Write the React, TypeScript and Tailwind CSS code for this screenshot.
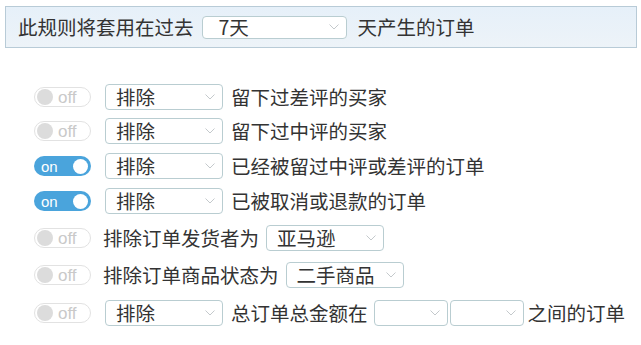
import React from "react";

const Chevron = () => (
  <svg width="10" height="6" viewBox="0 0 10 6" className="shrink-0">
    <polyline points="0.5,0.5 5,5 9.5,0.5" fill="none" stroke="#c4c9cc" strokeWidth="1" />
  </svg>
);

const Select = ({ value, w }: { value: string; w: string }) => (
  <div
    className={`${w} h-[26px] shrink-0 flex items-center justify-between pl-[10px] pr-[7px] border border-[#b9cdd1] rounded-[4px] bg-white`}
  >
    <span>{value}</span>
    <Chevron />
  </div>
);

const Toggle = ({ on }: { on: boolean }) =>
  on ? (
    <div className="w-[57px] h-[20px] shrink-0 rounded-full bg-[#4aa4dc] flex items-center justify-between pl-[7px] pr-[3px]">
      <span className="text-white text-[15px] leading-none font-medium" style={{ fontFamily: "Arial, 'Liberation Sans', sans-serif" }}>
        on
      </span>
      <span className="w-[15px] h-[15px] rounded-full bg-white" />
    </div>
  ) : (
    <div className="w-[57px] h-[20px] shrink-0 rounded-full border border-[#e2e2e2] bg-white flex items-center pl-[2px] gap-[5px]">
      <span className="w-[16px] h-[16px] rounded-full bg-[#dcdcdc]" />
      <span className="text-[#c9c9c9] text-[17px] leading-none" style={{ fontFamily: "Arial, 'Liberation Sans', sans-serif" }}>
        off
      </span>
    </div>
  );

export default function App() {
  return (
    <div
      className="w-[641px] h-[345px] bg-white text-[#333] text-[19.5px] overflow-hidden"
      style={{ fontFamily: "'Noto Sans CJK SC', 'Noto Sans', sans-serif" }}
    >
      <div className="ml-[5px] mr-[4px] mt-[6px] h-[42px] border border-[#b8cbd7] bg-gradient-to-b from-[#e6f0f9] to-[#edf3f8] flex items-center pl-[12px]">
        <span>此规则将套用在过去</span>
        <div className="ml-[8px] mr-[11px] w-[145px] h-[23px] flex items-center justify-between pl-[16px] pr-[7px] border border-[#b9cdd1] rounded-[4px] bg-white">
          <span>7天</span>
          <Chevron />
        </div>
        <span>天产生的订单</span>
      </div>

      <div className="pl-[34px] flex flex-col">
        <div className="mt-[36px] h-[26px] flex items-center">
          <Toggle on={false} />
          <div className="ml-[14px] mr-[8px]"><Select value="排除" w="w-[118px]" /></div>
          <span>留下过差评的买家</span>
        </div>
        <div className="mt-[8px] h-[26px] flex items-center">
          <Toggle on={false} />
          <div className="ml-[14px] mr-[8px]"><Select value="排除" w="w-[118px]" /></div>
          <span>留下过中评的买家</span>
        </div>
        <div className="mt-[9px] h-[26px] flex items-center">
          <Toggle on={true} />
          <div className="ml-[14px] mr-[8px]"><Select value="排除" w="w-[118px]" /></div>
          <span>已经被留过中评或差评的订单</span>
        </div>
        <div className="mt-[9px] h-[26px] flex items-center">
          <Toggle on={true} />
          <div className="ml-[14px] mr-[8px]"><Select value="排除" w="w-[118px]" /></div>
          <span>已被取消或退款的订单</span>
        </div>
        <div className="mt-[11px] h-[26px] flex items-center">
          <Toggle on={false} />
          <span className="ml-[12px] mr-[7px]">排除订单发货者为</span>
          <Select value="亚马逊" w="w-[118px]" />
        </div>
        <div className="mt-[11px] h-[26px] flex items-center">
          <Toggle on={false} />
          <span className="ml-[12px] mr-[7px]">排除订单商品状态为</span>
          <Select value="二手商品" w="w-[118px]" />
        </div>
        <div className="mt-[12px] h-[26px] flex items-center">
          <Toggle on={false} />
          <div className="ml-[14px] mr-[8px]"><Select value="排除" w="w-[118px]" /></div>
          <span className="mr-[6px]">总订单总金额在</span>
          <Select value="" w="w-[74px]" />
          <div className="ml-[2px] mr-[4px]"><Select value="" w="w-[74px]" /></div>
          <span>之间的订单</span>
        </div>
      </div>
    </div>
  );
}
